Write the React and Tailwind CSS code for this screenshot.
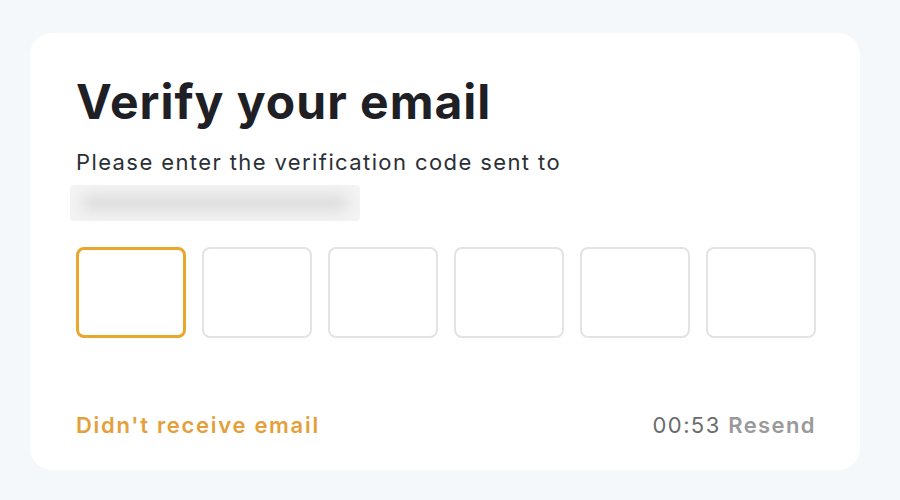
import React from 'react';

const VerifyEmail = () => {
    const boxes = [0, 1, 2, 3, 4, 5];

    return (
        <div className="w-[900px] h-[500px] bg-[#f5f8fb] pt-[33px] pl-[30px]" style={{ fontFamily: 'Inter, "Noto Sans", sans-serif' }}>
            <div className="w-[830px] h-[437px] bg-white rounded-[22px] pl-[46px] pr-[44px] pt-[43px] flex flex-col">
                <h1 className="text-[48px] leading-[52px] font-bold text-[#1e2026] tracking-[1px]">Verify your email</h1>
                <p className="mt-[21px] text-[22px] leading-[26px] text-[#2b2f36] tracking-[1.4px]">Please enter the verification code sent to</p>

                {/* masked address */}
                <div className="mt-[10px] -ml-[6px] w-[290px] h-[36px] bg-[#f3f3f3] rounded-sm overflow-hidden">
                    <div className="mx-[12px] mt-[10px] h-[16px] bg-[#dcdcdc] rounded-full blur-[7px]" />
                </div>

                <div className="mt-[26px] flex gap-[16px]">
                    {boxes.map((i) => (
                        <div
                            key={i}
                            className={`w-[110px] h-[91px] rounded-[8px] ${i === 0 ? 'border-[3px] border-[#eaa62d]' : 'border-2 border-[#e3e3e3]'}`}
                        />
                    ))}
                </div>

                <div className="mt-[74px] flex items-center justify-between">
                    <span className="text-[22px] leading-[26px] font-semibold text-[#e4a03a] tracking-[1.7px]">Didn't receive email</span>
                    <span className="text-[22px] leading-[26px] text-[#6b6b6b] tracking-[1.4px]">
                        00:53 <span className="font-semibold text-[#9a9a9a]">Resend</span>
                    </span>
                </div>
            </div>
        </div>
    );
};

export default function App() {
    return <VerifyEmail />;
}
